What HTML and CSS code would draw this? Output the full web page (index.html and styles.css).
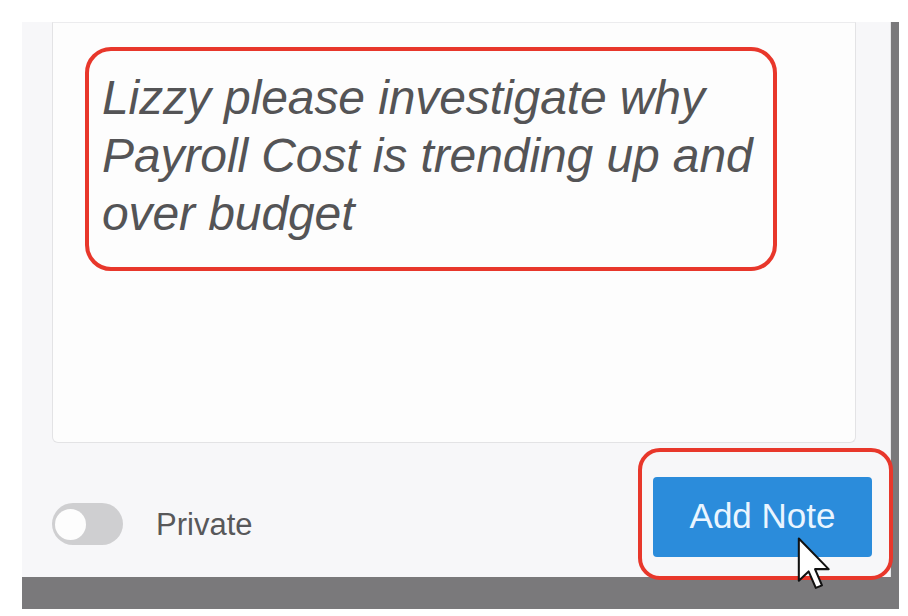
FILE: index.html
```html
<!DOCTYPE html>
<html lang="en">
<head>
<meta charset="utf-8">
<title>Add Note</title>
<link rel="stylesheet" href="styles.css">
</head>
<body>
  <div class="frame">
    <div class="panel">
      <div class="note-box" role="textbox" aria-multiline="true">
        <p class="note-text">Lizzy please investigate why Payroll Cost is trending up and over budget</p>
        <span class="highlight highlight-text"></span>
      </div>
      <div class="footer">
        <label class="private">
          <span class="toggle"><span class="knob"></span></span>
          <span class="private-label">Private</span>
        </label>
        <div class="action">
          <button class="add-btn" type="button">Add Note</button>
          <span class="highlight highlight-btn"></span>
          <svg class="cursor" width="34" height="54" viewBox="0 0 13 21" aria-hidden="true">
            <path d="M0.6 0.6 L0.6 17 L4.4 13.4 L7.2 19.8 L9.6 18.8 L6.9 12.5 L12.2 12.5 Z" fill="#ffffff" stroke="#111111" stroke-width="0.8" stroke-linejoin="round"/>
          </svg>
        </div>
      </div>
    </div>
  </div>
</body>
</html>
```

FILE: styles.css
```css
html, body {
  margin: 0;
  padding: 0;
  background: #ffffff;
}

body {
  width: 908px;
  height: 616px;
  overflow: hidden;
  font-family: "Liberation Sans", Arial, sans-serif;
}

.frame {
  margin: 22px 0 0 22px;
  width: 869px;
  padding: 0 8px 32px 0;
  background: #7a797b;
}

.panel {
  height: 555px;
  background: #f7f7f9;
  border-right: 1px solid #e6e6e8;
  padding: 0 18px 0 30px;
  box-sizing: border-box;
  display: flex;
  flex-direction: column;
}

.note-box {
  position: relative;
  height: 421px;
  margin-right: 16px;
  box-sizing: border-box;
  background: #fdfdfd;
  border: 1px solid #e3e3e5;
  border-top-color: #ececee;
  border-radius: 0 0 6px 6px;
  padding: 46px 50px 0 49px;
}

.note-text {
  margin: 0;
  font-family: "Liberation Sans", Arial, sans-serif;
  font-style: italic;
  font-size: 48px;
  line-height: 58px;
  color: #545456;
  letter-spacing: -0.1px;
}

.highlight {
  position: absolute;
  box-sizing: border-box;
  border: 4px solid #e8372b;
  pointer-events: none;
}

.highlight-text {
  left: 32px;
  top: 24px;
  width: 692px;
  height: 224px;
  border-radius: 26px;
}

.footer {
  display: flex;
  justify-content: space-between;
  align-items: flex-start;
  padding-top: 34px;
}

.private {
  display: flex;
  align-items: center;
  gap: 33px;
  margin-top: 25px;
}

.toggle {
  width: 71px;
  height: 42px;
  border-radius: 21px;
  background: #cfcfd1;
  display: flex;
  align-items: center;
  padding-left: 3px;
  box-sizing: border-box;
}

.knob {
  width: 31px;
  height: 31px;
  border-radius: 50%;
  background: #fdfdfd;
}

.private-label {
  font-size: 31px;
  color: #58585a;
  line-height: 42px;
  padding-top: 2px;
}

.action {
  position: relative;
}

.add-btn {
  display: block;
  width: 219px;
  height: 80px;
  border: none;
  border-radius: 4px;
  background: #2b8cdb;
  color: #eaf5ff;
  font-family: "Liberation Sans", Arial, sans-serif;
  font-size: 35px;
  padding: 0 0 2px 0;
  cursor: pointer;
}

.highlight-btn {
  left: -15px;
  top: -29px;
  width: 255px;
  height: 132px;
  border-radius: 22px;
}

.cursor {
  position: absolute;
  left: 144px;
  top: 60px;
}
```
